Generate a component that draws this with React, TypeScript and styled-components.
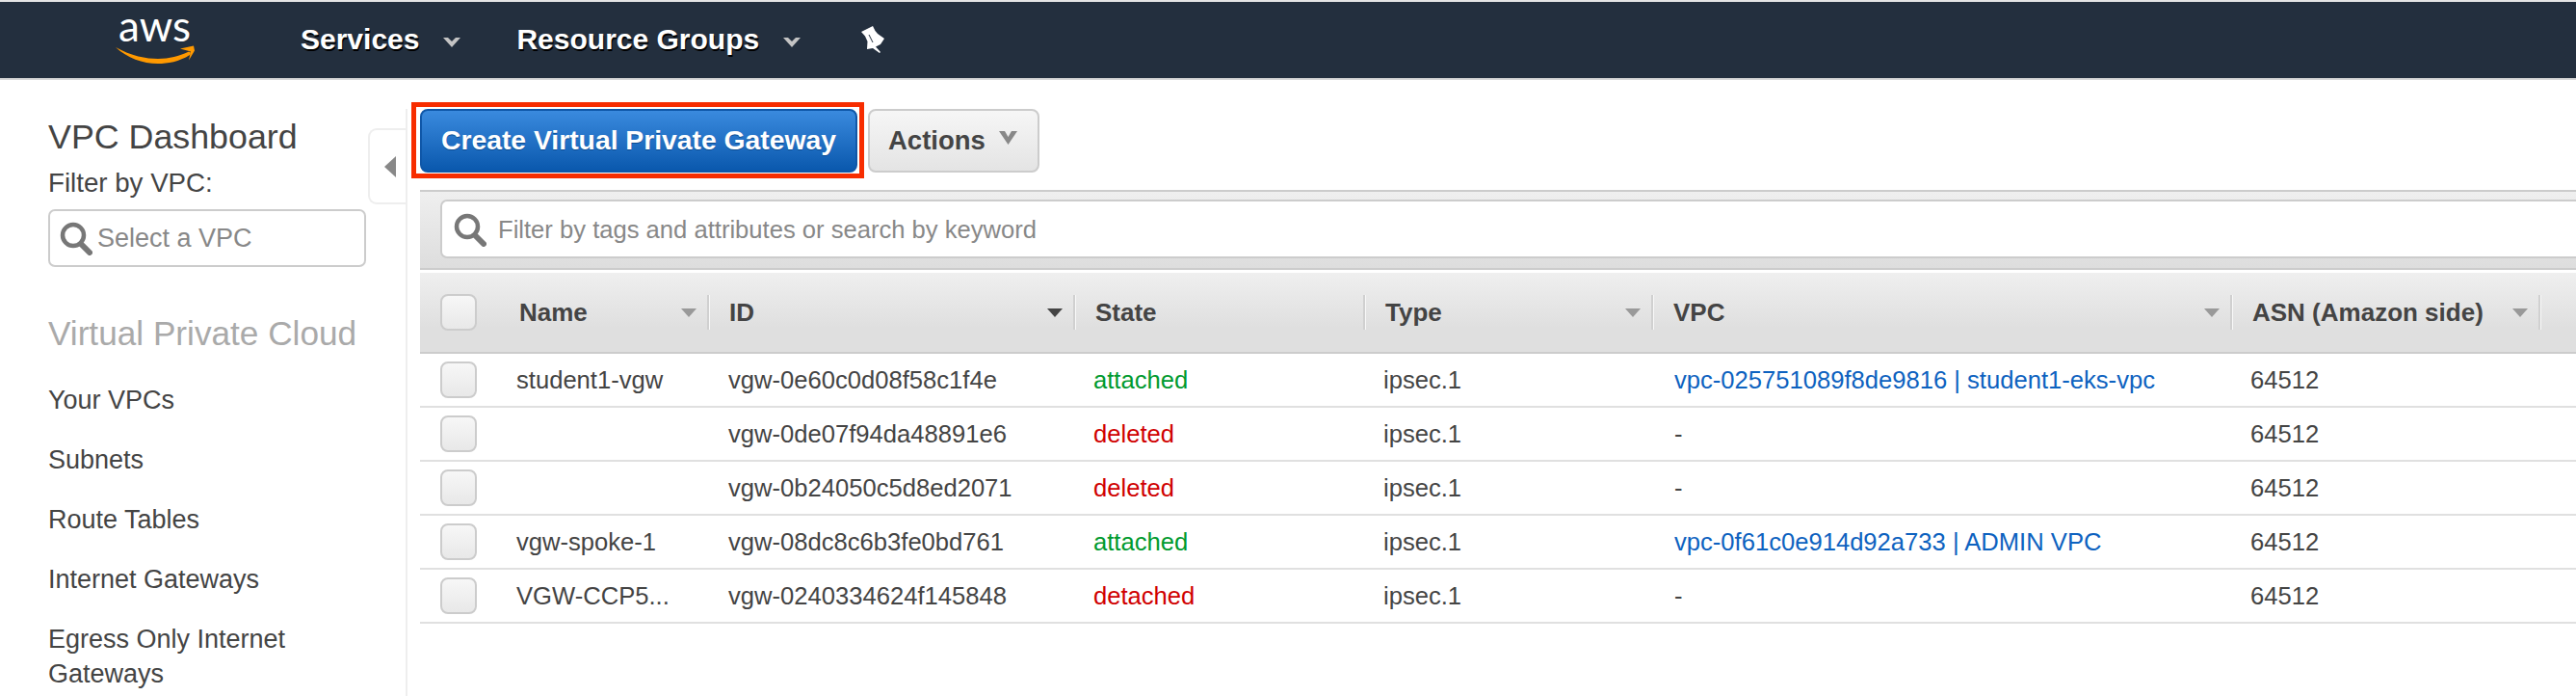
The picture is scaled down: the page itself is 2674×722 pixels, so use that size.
import React from 'react';
import styled, { createGlobalStyle } from 'styled-components';

const GlobalStyle = createGlobalStyle`
  html, body {
    margin: 0;
    height: 100%;
    overflow: hidden;
    background: #fff;
  }
  body {
    font-family: "Liberation Sans", Arial, sans-serif;
    color: #444;
  }
`;

const Page = styled.div`
  width: 2674px;
  height: 722px;
  overflow: hidden;
`;

const NavBar = styled.header`
  box-sizing: border-box;
  height: 83px;
  display: flex;
  align-items: center;
  background: #232f3e;
  border-top: 2px solid #e4e4e4;
  border-bottom: 2px solid #d8d8d8;
  padding-left: 118px;
`;

const LogoSvg = styled.svg`
  width: 88px;
  height: 62px;
  display: block;
  overflow: visible;
`;

const NavItem = styled.div<{ $gap: number }>`
  display: flex;
  align-items: center;
  gap: 25px;
  margin-left: ${(p) => p.$gap}px;
  margin-top: -2px;
  color: #fff;
  font-size: 30px;
  font-weight: 700;
  text-shadow: 1px 2px 0 #000;
  white-space: nowrap;
`;

const NavChevron = styled.svg`
  width: 18px;
  height: 10px;
  margin-top: 7px;
`;

const PinSvg = styled.svg`
  width: 24px;
  height: 28px;
  margin-left: 63px;
  margin-top: -1px;
`;

const Body = styled.div`
  display: flex;
  align-items: flex-start;
`;

const Sidebar = styled.aside`
  position: relative;
  box-sizing: border-box;
  flex: 0 0 423px;
  height: 609px;
  margin-top: 30px;
  padding: 7px 0 0 50px;
  border-right: 2px solid #eee;
  overflow: hidden;
  font-size: 27px;
  line-height: 36px;
`;

const CollapseTab = styled.div`
  position: absolute;
  top: 20px;
  right: 0;
  box-sizing: border-box;
  width: 39px;
  height: 79px;
  display: flex;
  align-items: center;
  padding-left: 15px;
  background: #fff;
  border: 2px solid #eee;
  border-right: none;
  border-radius: 9px 0 0 9px;
`;

const CollapseArrow = styled.div`
  width: 0;
  height: 0;
  border-top: 11px solid transparent;
  border-bottom: 11px solid transparent;
  border-right: 12px solid #888;
`;

const SideTitle = styled.div<{ $muted?: boolean }>`
  font-size: ${(p) => (p.$muted ? 35.2 : 35.8)}px;
  line-height: 44px;
  color: ${(p) => (p.$muted ? '#aaa' : '#444')};
  margin-top: ${(p) => (p.$muted ? 47 : 0)}px;
`;

const FilterLabel = styled.div`
  margin-top: 8px;
  color: #444;
  font-size: 27.7px;
`;

const VpcSelect = styled.div`
  box-sizing: border-box;
  width: 330px;
  height: 60px;
  margin-top: 9px;
  display: flex;
  align-items: center;
  gap: 5px;
  padding-left: 10px;
  border: 2px solid #ccc;
  border-radius: 7px;
  color: #888;
  font-size: 27px;
`;

const SideList = styled.nav`
  display: flex;
  flex-direction: column;
  gap: 26px;
  margin-top: 29px;
  width: 290px;
`;

const SideLink = styled.div`
  color: #444;
`;

const Main = styled.main`
  flex: 1;
  min-width: 0;
`;

const Toolbar = styled.div`
  display: flex;
  align-items: center;
  gap: 4px;
  padding: 23px 0 0 4px;
`;

const Highlight = styled.div`
  box-sizing: border-box;
  width: 470px;
  height: 79px;
  display: flex;
  align-items: center;
  padding-left: 4px;
  border: 5px solid #f72d00;
`;

const PrimaryButton = styled.button`
  box-sizing: border-box;
  width: 454px;
  height: 66px;
  padding: 0;
  border: 2px solid #0f57a8;
  border-radius: 8px;
  background: linear-gradient(#3a8ade, #0a58ad);
  color: #fff;
  font: 700 28.3px "Liberation Sans", Arial, sans-serif;
  text-shadow: 0 1px 0 #0a4a90;
`;

const ActionsButton = styled.button`
  box-sizing: border-box;
  width: 178px;
  height: 66px;
  display: flex;
  align-items: center;
  gap: 14px;
  padding: 0 0 0 19px;
  border: 2px solid #ccc;
  border-radius: 8px;
  background: linear-gradient(#f6f6f6, #e4e4e4);
  color: #444;
  font: 700 27.5px "Liberation Sans", Arial, sans-serif;
`;

const ActionsCaret = styled.svg`
  width: 19px;
  height: 14px;
  margin-top: -6px;
`;

const FilterBand = styled.div`
  box-sizing: border-box;
  height: 83px;
  margin: 12px 0 3px 13px;
  padding-top: 8px;
  padding-left: 21px;
  background: linear-gradient(#efefef, #dddddd);
  border-top: 2px solid #ccc;
  border-bottom: 2px solid #ccc;
  overflow: hidden;
`;

const FilterInput = styled.div`
  box-sizing: border-box;
  height: 61px;
  width: calc(100% + 20px);
  display: flex;
  align-items: center;
  gap: 12px;
  padding: 2px 0 0 12px;
  background: #fff;
  border: 2px solid #ccc;
  border-radius: 7px;
  color: #888;
  font-size: 25.6px;
`;

const SearchSvg = styled.svg`
  width: 34px;
  height: 35px;
  flex: none;
`;

const Table = styled.div`
  margin-left: 13px;
`;

const headColumns = '81px 219px 380px 301px 299px 601px 320px 1fr';
const rowColumns = '80px 219px 380px 301px 299px 601px 320px 1fr';

const HeadRow = styled.div`
  box-sizing: border-box;
  height: 84px;
  display: grid;
  grid-template-columns: ${headColumns};
  align-items: center;
  background: linear-gradient(#efefef, #dfdfdf 70%);
  border-bottom: 2px solid #ccc;
`;

const HeadCell = styled.div<{ $pad: number }>`
  box-sizing: border-box;
  height: 36px;
  display: flex;
  align-items: center;
  justify-content: space-between;
  padding: 0 11px 0 ${(p) => p.$pad}px;
  border-right: 2px solid #d0d0d0;
  box-shadow: 1px 0 0 #f8f8f8;
  font-size: 26px;
  font-weight: 700;
  white-space: nowrap;
`;

const SortCaret = styled.div<{ $active?: boolean }>`
  width: 0;
  height: 0;
  border-left: 8px solid transparent;
  border-right: 8px solid transparent;
  border-top: 9px solid ${(p) => (p.$active ? '#444' : '#999')};
`;

const Row = styled.div`
  box-sizing: border-box;
  height: 56px;
  display: grid;
  grid-template-columns: ${rowColumns};
  align-items: center;
  border-bottom: 2px solid #e0e0e0;
`;

const Cell = styled.div<{ $color?: string; $pad?: number }>`
  padding-left: ${(p) => p.$pad ?? 20}px;
  font-size: 25.6px;
  white-space: nowrap;
  color: ${(p) => p.$color ?? '#444'};
`;

const CheckCell = styled.div`
  padding-left: 21px;
`;

const Checkbox = styled.div`
  box-sizing: border-box;
  width: 38px;
  height: 38px;
  border: 2px solid #ccc;
  border-radius: 8px;
  background: linear-gradient(#f7f7f7, #e8e8e8);
`;

const GREEN = '#009a2f';
const RED = '#d00000';
const BLUE = '#0d62c0';

const rows = [
  { name: 'student1-vgw', id: 'vgw-0e60c0d08f58c1f4e', state: 'attached', vpc: 'vpc-025751089f8de9816 | student1-eks-vpc' },
  { name: '', id: 'vgw-0de07f94da48891e6', state: 'deleted', vpc: '-' },
  { name: '', id: 'vgw-0b24050c5d8ed2071', state: 'deleted', vpc: '-' },
  { name: 'vgw-spoke-1', id: 'vgw-08dc8c6b3fe0bd761', state: 'attached', vpc: 'vpc-0f61c0e914d92a733 | ADMIN VPC' },
  { name: 'VGW-CCP5...', id: 'vgw-0240334624f145848', state: 'detached', vpc: '-' },
];

const sideLinks = ['Your VPCs', 'Subnets', 'Route Tables', 'Internet Gateways', 'Egress Only Internet Gateways'];

function SearchIcon() {
  return (
    <SearchSvg viewBox="0 0 34 35">
      <circle cx="14" cy="14" r="11" fill="none" stroke="#777" strokeWidth="4.5" />
      <path d="M22 23 L31 32" stroke="#777" strokeWidth="6" strokeLinecap="round" />
    </SearchSvg>
  );
}

function Logo() {
  return (
    <LogoSvg viewBox="0 0 88 62">
      <text x="5" y="31.5" fontFamily="Lato, sans-serif" fontSize="44" fill="#fff" textLength="75" lengthAdjust="spacingAndGlyphs">
        aws
      </text>
      <path d="M2 38 C18 47 34 50 46 50 C58 50 68 47 77 43 C79 42 81 44 79 46 C68 53 56 55 46 55 C30 55 14 49 2 38 Z" fill="#f90" />
      <path d="M69 39.5 L83 36.5 L84 41.5 L78 51.5 L80 42.5 Z" fill="#f90" />
    </LogoSvg>
  );
}

function Chevron() {
  return (
    <NavChevron viewBox="0 0 18 10">
      <path d="M0 0 L5 0 L9 4 L13 0 L18 0 L9 10 Z" fill="#c4c4c4" />
    </NavChevron>
  );
}

function PinIcon() {
  return (
    <PinSvg viewBox="0 0 24 28">
      <path d="M0 6 L12 0 L14.5 5 L17 8 L24 13 L20 19 L15 21.5 L20 27 L19 28 L12 23 L6 24 L6.5 16 L4 10.5 Z" fill="#fff" />
      <path d="M8 9 L12 17" stroke="#232f3e" strokeWidth="1" />
    </PinSvg>
  );
}

export default function App() {
  return (
    <Page>
      <GlobalStyle />
      <NavBar>
        <Logo />
        <NavItem $gap={106}>
          Services
          <Chevron />
        </NavItem>
        <NavItem $gap={58}>
          Resource Groups
          <Chevron />
        </NavItem>
        <PinIcon />
      </NavBar>
      <Body>
        <Sidebar>
          <CollapseTab>
            <CollapseArrow />
          </CollapseTab>
          <SideTitle>VPC Dashboard</SideTitle>
          <FilterLabel>Filter by VPC:</FilterLabel>
          <VpcSelect>
            <SearchIcon />
            Select a VPC
          </VpcSelect>
          <SideTitle $muted>Virtual Private Cloud</SideTitle>
          <SideList>
            {sideLinks.map((link) => (
              <SideLink key={link}>{link}</SideLink>
            ))}
          </SideList>
        </Sidebar>
        <Main>
          <Toolbar>
            <Highlight>
              <PrimaryButton>Create Virtual Private Gateway</PrimaryButton>
            </Highlight>
            <ActionsButton>
              Actions
              <ActionsCaret viewBox="0 0 19 14">
                <path d="M0 0 L6 0 L9.5 6 L13 0 L19 0 L9.5 14 Z" fill="#888" />
              </ActionsCaret>
            </ActionsButton>
          </Toolbar>
          <FilterBand>
            <FilterInput>
              <SearchIcon />
              Filter by tags and attributes or search by keyword
            </FilterInput>
          </FilterBand>
          <Table>
            <HeadRow>
              <CheckCell>
                <Checkbox />
              </CheckCell>
              <HeadCell $pad={22}>
                Name
                <SortCaret />
              </HeadCell>
              <HeadCell $pad={21}>
                ID
                <SortCaret $active />
              </HeadCell>
              <HeadCell $pad={21}>State</HeadCell>
              <HeadCell $pad={21}>
                Type
                <SortCaret />
              </HeadCell>
              <HeadCell $pad={21}>
                VPC
                <SortCaret />
              </HeadCell>
              <HeadCell $pad={21}>
                ASN (Amazon side)
                <SortCaret />
              </HeadCell>
            </HeadRow>
            {rows.map((row) => (
              <Row key={row.id}>
                <CheckCell>
                  <Checkbox />
                </CheckCell>
                <Cell>{row.name}</Cell>
                <Cell $pad={21}>{row.id}</Cell>
                <Cell $color={row.state === 'attached' ? GREEN : RED}>{row.state}</Cell>
                <Cell>ipsec.1</Cell>
                <Cell $pad={23} $color={row.vpc === '-' ? '#444' : BLUE}>
                  {row.vpc}
                </Cell>
                <Cell>64512</Cell>
              </Row>
            ))}
          </Table>
        </Main>
      </Body>
    </Page>
  );
}
